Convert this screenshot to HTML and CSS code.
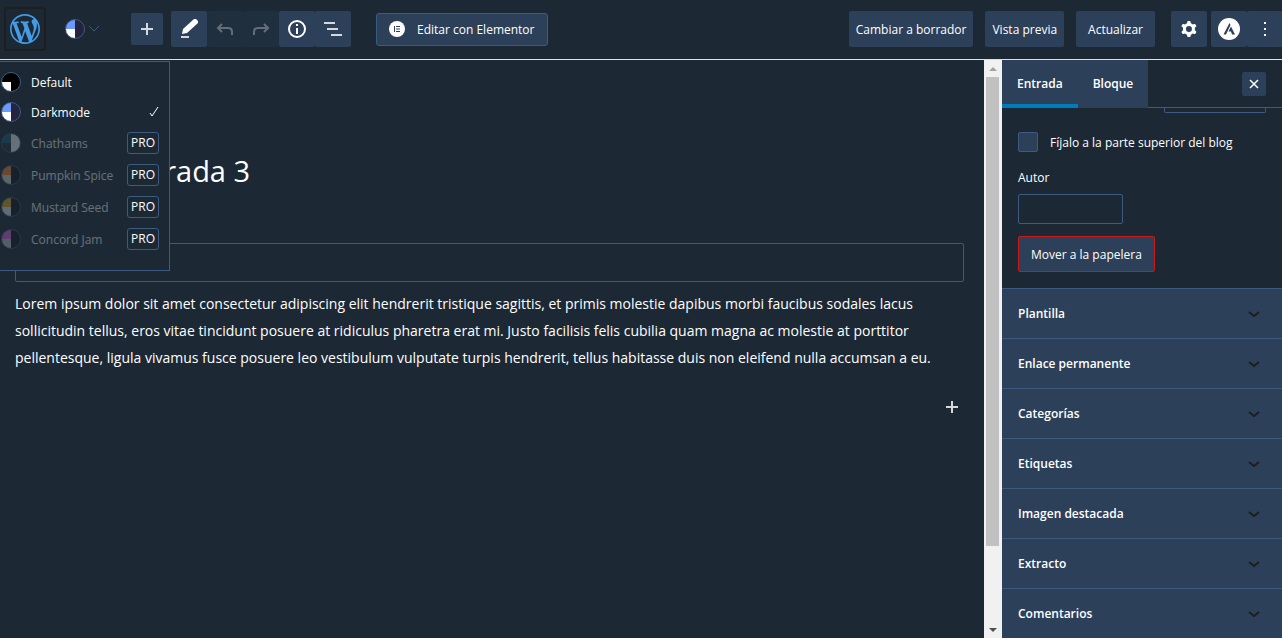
FILE: index.html
```html
<!doctype html>
<html lang="es">
    <head>
        <title>Editar entrada</title>
        <meta charset="utf-8">
        <link rel="stylesheet" href="styles.css">
    </head>

    <body>
        <header class="header">
            <a class="wp-logo" href="#" aria-label="WordPress">
                <svg viewBox="0 0 20 20" width="30" height="30"><path d="M20 10c0-5.51-4.49-10-10-10C4.48 0 0 4.49 0 10c0 5.52 4.48 10 10 10 5.51 0 10-4.48 10-10zM7.78 15.37L4.37 6.22c.55-.02 1.17-.08 1.17-.08.5-.06.44-1.13-.06-1.11 0 0-1.45.11-2.37.11-.18 0-.37 0-.58-.01C4.12 2.69 6.87 1.11 10 1.11c2.33 0 4.45.87 6.05 2.34-.68-.11-1.65.39-1.65 1.58 0 .74.45 1.36.9 2.1.35.61.55 1.36.55 2.46 0 1.49-1.4 5-1.4 5l-3.03-8.37c.54-.02.82-.17.82-.17.5-.05.44-1.25-.06-1.22 0 0-1.44.12-2.38.12-.87 0-2.33-.12-2.33-.12-.5-.03-.56 1.2-.06 1.22l.92.08 1.26 3.41zM17.41 10c.24-.64.74-1.87.43-4.25.7 1.29 1.05 2.71 1.05 4.25 0 3.29-1.73 6.24-4.4 7.78.97-2.59 1.94-5.2 2.92-7.78zM6.1 18.09C3.12 16.65 1.11 13.53 1.11 10c0-1.3.23-2.48.72-3.59C3.25 10.3 4.67 14.2 6.1 18.09zm4.03-6.63l2.58 6.98c-.86.29-1.76.45-2.71.45-.79 0-1.57-.11-2.29-.33.81-2.38 1.62-4.74 2.42-7.1z"/></svg>
            </a>

            <div class="scheme">
                <button class="scheme-toggle" aria-label="Darkmode">
                    <span class="swatch darkmode"></span>
                    <svg viewBox="0 0 12 8" width="12" height="8"><path d="M1 1l5 5 5-5"/></svg>
                </button>
                <ul class="scheme-menu">
                    <li><button class="scheme-item"><span class="swatch default"></span>Default</button></li>
                    <li><button class="scheme-item"><span class="swatch darkmode"></span>Darkmode
                        <svg class="tick" viewBox="0 0 10 12" width="10" height="12"><path d="M1 7l2 3L9 1"/></svg></button></li>
                    <li class="locked"><button class="scheme-item" disabled><span class="swatch chathams"></span>Chathams</button><a class="pro" href="#">PRO</a></li>
                    <li class="locked"><button class="scheme-item" disabled><span class="swatch pumpkin"></span>Pumpkin Spice</button><a class="pro" href="#">PRO</a></li>
                    <li class="locked"><button class="scheme-item" disabled><span class="swatch mustard"></span>Mustard Seed</button><a class="pro" href="#">PRO</a></li>
                    <li class="locked"><button class="scheme-item" disabled><span class="swatch concord"></span>Concord Jam</button><a class="pro" href="#">PRO</a></li>
                </ul>
            </div>

            <div class="tools">
                <button class="tool add" aria-label="Añadir bloque">
                    <svg viewBox="0 0 24 24" width="24" height="24"><path class="soft" d="M11 6h2v5h5v2h-5v5h-2v-5H6v-2h5z"/></svg>
                </button>
                <div class="tool-group">
                    <button class="tool" aria-label="Herramientas">
                        <svg viewBox="0 0 24 24" width="24" height="24"><path d="M17 2h2l2 2v2L10 16l-5 1 1-5z"/><path class="soft" d="M4 19h8v2H4z"/></svg>
                    </button>
                    <button class="tool" aria-label="Deshacer" disabled>
                        <svg viewBox="0 0 24 24" width="24" height="24"><path class="line" d="M9 7l-4 4 4 4M5 11h10q4 0 4 4v3"/></svg>
                    </button>
                    <button class="tool" aria-label="Rehacer" disabled>
                        <svg viewBox="0 0 24 24" width="24" height="24"><path class="line" d="M15 7l4 4-4 4M19 11H9q-4 0-4 4v3"/></svg>
                    </button>
                    <button class="tool" aria-label="Detalles">
                        <svg viewBox="0 0 24 24" width="24" height="24"><circle class="line" cx="12" cy="12" r="8"/><path d="M11 7h2v2h-2zM11 11h2v6h-2z"/></svg>
                    </button>
                    <button class="tool" aria-label="Vista de lista">
                        <svg viewBox="0 0 24 24" width="24" height="24"><path class="soft" d="M3 5h11v2H3zM6 11h11v2H6zM10 17h11v2H10z"/></svg>
                    </button>
                </div>
            </div>

            <button class="elementor">
                <svg viewBox="0 0 16 16" width="16" height="16"><circle cx="8" cy="8" r="8"/><path class="cut" d="M5 5h1v6H5zM7 5h4v1H7zM7 7.5h4v1H7zM7 10h4v1H7z"/></svg>
                Editar con Elementor
            </button>

            <div class="settings">
                <button class="action">Cambiar a borrador</button>
                <button class="action">Vista previa</button>
                <button class="action publish">Actualizar</button>
                <button class="tool gear" aria-label="Ajustes">
                    <svg viewBox="0 0 24 24" width="24" height="24"><path fill-rule="evenodd" d="M10.289 4.836A1 1 0 0111.275 4h1.306a1 1 0 01.987.836l.244 1.466c.787.26 1.503.679 2.108 1.218l1.393-.522a1 1 0 011.216.437l.653 1.13a1 1 0 01-.23 1.273l-1.148.944a6.025 6.025 0 010 2.435l1.149.946a1 1 0 01.23 1.272l-.653 1.13a1 1 0 01-1.216.437l-1.394-.522c-.605.54-1.32.958-2.108 1.218l-.244 1.466a1 1 0 01-.987.836h-1.306a1 1 0 01-.986-.836l-.244-1.466a5.995 5.995 0 01-2.108-1.218l-1.394.522a1 1 0 01-1.217-.436l-.653-1.131a1 1 0 01.23-1.272l1.149-.946a6.026 6.026 0 010-2.435l-1.148-.944a1 1 0 01-.23-1.272l.653-1.131a1 1 0 011.217-.437l1.393.522a5.994 5.994 0 012.108-1.218l.244-1.466zM14.929 12a3 3 0 11-6 0 3 3 0 016 0z"/></svg>
                </button>
                <div class="tool-group">
                    <button class="tool" aria-label="Astra">
                        <svg viewBox="0 0 22 22" width="22" height="22"><circle cx="11" cy="11" r="11"/><path class="cut" d="M11.500 5L5.500 16.500h2.500l4.500-9.500zM13 8.500l-2.500 5h2.500l1 3h3z"/></svg>
                    </button>
                    <button class="tool" aria-label="Opciones">
                        <svg viewBox="0 0 24 24" width="24" height="24"><path d="M11 5h2v2h-2zM11 11h2v2h-2zM11 17h2v2h-2z"/></svg>
                    </button>
                </div>
            </div>
        </header>

        <div class="editor">
            <main class="canvas">
                <h1 class="title">Prueba entrada 3</h1>
                <input class="block-field" type="text" aria-label="Bloque">
                <p class="paragraph">Lorem ipsum dolor sit amet consectetur adipiscing elit hendrerit tristique sagittis, et primis molestie dapibus morbi faucibus sodales lacus sollicitudin tellus, eros vitae tincidunt posuere at ridiculus pharetra erat mi. Justo facilisis felis cubilia quam magna ac molestie at porttitor pellentesque, ligula vivamus fusce posuere leo vestibulum vulputate turpis hendrerit, tellus habitasse duis non eleifend nulla accumsan a eu.</p>
                <button class="appender" aria-label="Añadir bloque">
                    <svg viewBox="0 0 24 24" width="24" height="24"><path class="soft" d="M11 6h2v5h5v2h-5v5h-2v-5H6v-2h5z"/></svg>
                </button>
            </main>

            <div class="scrollbar">
                <svg viewBox="0 0 8 4" width="8" height="4"><path class="up" d="M0 4l4-4 4 4z"/></svg>
                <div class="track"><div class="thumb"></div></div>
                <svg viewBox="0 0 8 4" width="8" height="4"><path class="down" d="M0 0l4 4 4-4z"/></svg>
            </div>

            <aside class="sidebar">
                <div class="tabs">
                    <button class="tab active">Entrada</button>
                    <button class="tab">Bloque</button>
                    <button class="close" aria-label="Cerrar">
                        <svg viewBox="0 0 10 10" width="10" height="10"><path d="M1 1l8 8M9 1L1 9"/></svg>
                    </button>
                </div>

                <div class="status">
                    <div class="cut-field"></div>
                    <label class="check"><input type="checkbox">Fíjalo a la parte superior del blog</label>
                    <label class="author-label" for="author">Autor</label>
                    <input class="author" id="author" type="text">
                    <button class="trash">Mover a la papelera</button>
                </div>

                <button class="panel">Plantilla<svg viewBox="0 0 12 6" width="12" height="6"><path d="M1 1l5 4 5-4"/></svg></button>
                <button class="panel">Enlace permanente<svg viewBox="0 0 12 6" width="12" height="6"><path d="M1 1l5 4 5-4"/></svg></button>
                <button class="panel">Categorías<svg viewBox="0 0 12 6" width="12" height="6"><path d="M1 1l5 4 5-4"/></svg></button>
                <button class="panel">Etiquetas<svg viewBox="0 0 12 6" width="12" height="6"><path d="M1 1l5 4 5-4"/></svg></button>
                <button class="panel">Imagen destacada<svg viewBox="0 0 12 6" width="12" height="6"><path d="M1 1l5 4 5-4"/></svg></button>
                <button class="panel">Extracto<svg viewBox="0 0 12 6" width="12" height="6"><path d="M1 1l5 4 5-4"/></svg></button>
                <button class="panel">Comentarios<svg viewBox="0 0 12 6" width="12" height="6"><path d="M1 1l5 4 5-4"/></svg></button>
            </aside>
        </div>
    </body>
</html>
```
FILE: styles.css
```css
:root{
    --bg: #1c2935;
    --panel: #2d4059;
    --line: #3d5a80;
}

*{
    box-sizing: border-box;
}

body{
    margin: 0;
    height: 100vh;
    display: flex;
    flex-direction: column;
    overflow: hidden;
    background: var(--bg);
    color: #fff;
    font-family: "Open Sans", "Noto Sans", sans-serif;
    font-size: 12px;
}

button, input{
    font: inherit;
    color: inherit;
}

button{
    padding: 0;
    border: none;
    background: none;
    white-space: nowrap;
    cursor: pointer;
}

svg{
    display: block;
    flex: none;
    fill: #fff;
}

.soft{
    fill: #d5d9de;
}

.line{
    fill: none;
    stroke: #fff;
    stroke-width: 2;
}

.cut{
    fill: var(--panel);
}

/* top bar */

.header{
    display: flex;
    align-items: center;
    flex: none;
    height: 60px;
    padding-bottom: 1px;
    border-bottom: 1px solid #e0e0e0;
}

.wp-logo{
    display: flex;
    align-items: center;
    justify-content: center;
    width: 42px;
    height: 44px;
    margin-left: 4px;
    border: 2px solid #1e1e1e;
    border-radius: 3px;
}

.wp-logo svg{
    fill: #459be6;
}

.scheme{
    position: relative;
    margin-left: 19px;
}

.scheme-toggle{
    display: flex;
    align-items: center;
    gap: 3px;
}

.scheme-toggle svg, .tick, .close svg, .panel svg{
    fill: none;
    stroke: var(--line);
}

.scheme-menu{
    position: absolute;
    top: 42px;
    left: -66px;
    z-index: 2;
    width: 171px;
    height: 210px;
    margin: 0;
    padding: 5px 10px 0 1px;
    list-style: none;
    background: var(--bg);
    border: 1px solid var(--line);
}

.scheme-menu li{
    display: flex;
    align-items: center;
    height: 30px;
}

.scheme-menu li.locked{
    height: 32px;
}

.scheme-item{
    display: flex;
    align-items: center;
    flex: 1;
    gap: 10px;
}

.scheme-item:disabled{
    opacity: .33;
    color: #fff;
}

.scheme-item .tick{
    margin-left: auto;
    stroke: #fff;
}

.pro{
    padding: 0 3px;
    line-height: 20px;
    color: #fff;
    text-decoration: none;
    border: 1px solid var(--line);
    border-radius: 3px;
}

.swatch{
    flex: none;
    width: 20px;
    height: 20px;
    border: 1px solid var(--line);
    border-radius: 50%;
}

.default{
    background: conic-gradient(#000 50%, #fff 50% 75%, #000 75%);
}

.darkmode{
    background: conic-gradient(#25233e 50%, #fff 50% 75%, #6a9bfb 75%);
}

.chathams{
    background: conic-gradient(#fff 50%, #20303c 50% 75%, #17607a 75%);
}

.pumpkin{
    background: conic-gradient(#111 50%, #e0e0d8 50% 75%, #ff8a2a 75%);
}

.mustard{
    background: conic-gradient(#111 50%, #e8eef2 50% 75%, #e5b020 75%);
}

.concord{
    background: conic-gradient(#111 50%, #c8c8d4 50% 75%, #e868e8 75%);
}

.tools{
    display: flex;
    align-items: center;
    gap: 8px;
    margin-left: 31px;
}

.tool-group{
    display: flex;
}

.tool{
    display: flex;
    align-items: center;
    justify-content: center;
    width: 36px;
    height: 36px;
    background: var(--panel);
    border-radius: 2px;
}

.tool.add{
    width: 32px;
    height: 32px;
}

.tool:disabled{
    background: #202f3e;
}

.tool:disabled svg{
    opacity: .3;
}

.elementor{
    display: flex;
    align-items: center;
    gap: 12px;
    height: 33px;
    margin-left: 25px;
    padding: 0 12px;
    background: var(--panel);
    border: 1px solid var(--line);
    border-radius: 3px;
}

.settings{
    display: flex;
    align-items: center;
    gap: 12px;
    margin: 0 -1px 0 auto;
}

.action{
    height: 36px;
    padding: 0 7px;
    background: var(--panel);
    border-radius: 2px;
}

.publish{
    padding: 0 12px;
}

.gear{
    margin: 0 -8px 0 4px;
}

/* editing area */

.editor{
    display: flex;
    flex: 1;
    min-height: 0;
}

.canvas{
    flex: 1;
    padding: 87px 20px 0 15px;
}

.title{
    margin: 0;
    font-size: 29px;
    font-weight: 400;
    line-height: 48px;
}

.block-field{
    display: block;
    width: 100%;
    height: 39px;
    margin-top: 48px;
    background: none;
    border: 1px solid var(--line);
    border-radius: 2px;
}

.paragraph{
    margin: 8px 0 0;
    font-size: 14px;
    line-height: 27px;
}

.appender{
    display: block;
    margin: 24px 0 0 auto;
}

.scrollbar{
    display: flex;
    flex-direction: column;
    align-items: center;
    width: 18px;
    padding: 7px 1px 6px 0;
    background: #f1f1f1;
}

.track{
    flex: 1;
    margin: 6px 0;
}

.thumb{
    width: 13px;
    height: 86%;
    background: #c1c1c1;
}

.up{
    fill: #a3a3a3;
}

.down{
    fill: #505050;
}

/* settings sidebar */

.sidebar{
    flex: none;
    width: 280px;
    overflow: hidden;
}

.tabs{
    display: flex;
    align-items: center;
    height: 48px;
    padding-right: 16px;
    border-bottom: 1px solid var(--line);
}

.tab{
    height: 48px;
    padding: 0 15px;
    font-weight: 600;
    background: var(--panel);
}

.tab.active{
    box-shadow: inset 0 -4px #007cba;
}

.close{
    display: flex;
    align-items: center;
    justify-content: center;
    width: 24px;
    height: 24px;
    margin-left: auto;
    background: var(--panel);
    border-radius: 2px;
}

.close svg{
    stroke: #fff;
    stroke-width: 1.5;
}

.status{
    display: flex;
    flex-direction: column;
    align-items: flex-start;
    padding: 0 16px 16px;
}

.cut-field{
    align-self: flex-end;
    width: 102px;
    height: 5px;
    border: 1px solid var(--line);
    border-top: none;
    border-radius: 0 0 2px 2px;
}

.check{
    display: flex;
    align-items: center;
    gap: 12px;
    margin-top: 19px;
}

.check input{
    appearance: none;
    width: 20px;
    height: 20px;
    margin: 0;
    background: var(--panel);
    border: 1px solid var(--line);
    border-radius: 2px;
}

.author-label{
    margin-top: 16px;
    line-height: 20px;
}

.author{
    width: 105px;
    height: 30px;
    margin-top: 6px;
    background: none;
    border: 1px solid var(--line);
    border-radius: 2px;
}

.trash{
    height: 36px;
    margin-top: 12px;
    padding: 0 12px;
    background: var(--panel);
    border: 1px solid #cc1818;
    border-radius: 2px;
}

.panel{
    display: flex;
    align-items: center;
    justify-content: space-between;
    width: 100%;
    height: 50px;
    padding: 0 22px 0 16px;
    font-weight: 600;
    background: var(--panel);
    border-top: 1px solid var(--line);
}

.panel svg{
    stroke: #1e1e1e;
    stroke-width: 2;
}
```
